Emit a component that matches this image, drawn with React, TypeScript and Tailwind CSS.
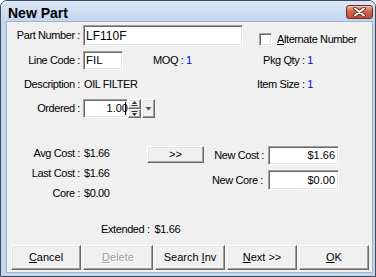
const font = "font-['Liberation_Sans',Arial,sans-serif]";
const sunken =
  'bg-white border border-t-[#a0a0a0] border-l-[#a0a0a0] border-r-white border-b-white shadow-[inset_1px_1px_0_#696969,inset_-1px_-1px_0_#e3e3e3]';
const raised =
  'bg-[#f0f0f0] border border-t-white border-l-white border-r-[#696969] border-b-[#696969] shadow-[inset_-1px_-1px_0_#a0a0a0,inset_1px_1px_0_#e3e3e3]';
const label = 'text-[11px] tracking-[-0.4px] text-black leading-none whitespace-nowrap';
const blue = 'text-[#0000ff]';

function CloseButton() {
  return (
    <div className="self-start w-[27px] h-[14px] mt-[4px] rounded-[3px] border border-[#6b2b24] bg-gradient-to-b from-[#e9a99b] via-[#d2614e] to-[#c44a36] flex items-center justify-center shadow-[inset_0_1px_0_#f4c8bd]">
      <svg width="13" height="10" viewBox="0 0 13 10">
        <path d="M2 1.5 L11 8.5 M11 1.5 L2 8.5" stroke="#5a2620" strokeWidth="3.6" strokeLinecap="round" />
        <path d="M2 1.5 L11 8.5 M11 1.5 L2 8.5" stroke="#ffffff" strokeWidth="2" strokeLinecap="round" />
      </svg>
    </div>
  );
}

function Btn({ children, disabled }: { children: React.ReactNode; disabled?: boolean }) {
  return (
    <div
      className={`w-[70px] h-[25px] ${raised} flex items-center justify-center text-[11px] ${
        disabled ? 'text-[#a0a0a0] [text-shadow:1px_1px_0_#fff]' : 'text-black'
      }`}
    >
      <span className="whitespace-pre">{children}</span>
    </div>
  );
}

function Row({ children, className }: { children: React.ReactNode; className: string }) {
  return <div className={`flex items-center ${className}`}>{children}</div>;
}

function Label({ children, w = 'w-[73px]' }: { children: React.ReactNode; w?: string }) {
  return <div className={`${w} text-right ${label}`}>{children}</div>;
}

export default function App() {
  return (
    <div className={`${font} w-[376px] h-[277px] rounded-t-[7px] border border-[#3e4c5e] bg-[#c3d6ee] flex flex-col`}>
      <div className="h-[20px] rounded-t-[6px] bg-gradient-to-b from-[#dbe7f5] to-[#c2d6ee] flex items-center justify-between pl-[7px] pr-[2px]">
        <span className="text-[14px] font-bold text-black leading-none mt-[3px]">New Part</span>
        <CloseButton />
      </div>

      <div className="ml-[5px] w-[367px] h-[252px] border border-[#9fb3cb] bg-[#f0f0f0] flex flex-col">
        {/* part number */}
        <div className="flex mt-[3px] h-[21px]">
          <div className="flex items-center">
            <Label>Part Number :</Label>
          </div>
          <div className={`ml-[3px] w-[160px] h-[21px] ${sunken} flex items-center pl-[2px] text-[12px] text-black`}>LF110F</div>
          <div className="ml-[16px] mt-[8px] flex items-center self-start">
            <div className={`w-[13px] h-[13px] ${sunken}`} />
            <span className={`ml-[5px] ${label}`}>
              <u>A</u>lternate Number
            </span>
          </div>
        </div>

        <Row className="mt-[5px] h-[19px]">
          <Label>Line Code :</Label>
          <div className={`ml-[3px] w-[40px] h-[19px] ${sunken} flex items-center pl-[2px] text-[11.5px] text-black`}>FIL</div>
          <span className={`ml-[30px] ${label}`}>
            MOQ : <span className={blue}>1</span>
          </span>
          <span className={`ml-auto mr-[59px] ${label}`}>
            Pkg Qty : <span className={blue}>1</span>
          </span>
        </Row>

        <Row className="mt-[5px] h-[18px]">
          <Label>Description :</Label>
          <span className={`ml-[4px] ${label} ${blue}`}>OIL FILTER</span>
          <span className={`ml-auto mr-[59px] ${label}`}>
            Item Size : <span className={blue}>1</span>
          </span>
        </Row>

        <Row className="mt-[6px] h-[19px]">
          <Label>Ordered :</Label>
          <div className={`ml-[3px] w-[45px] h-[19px] ${sunken} flex items-center justify-end pr-[1px] text-[11px] text-black`}>
            1.00
            <span className="w-[1px] h-[13px] bg-black -ml-[3px]" />
          </div>
          <div className="w-[13px] h-[19px] flex flex-col">
            <div className={`h-[10px] ${raised} flex items-center justify-center`}>
              <svg width="7" height="6" viewBox="0 0 7 6">
                <path d="M3.5 0 L6 3 L1 3 Z" fill="#333" />
                <rect x="0.5" y="4" width="6" height="1" fill="#333" />
              </svg>
            </div>
            <div className={`h-[9px] ${raised} flex items-center justify-center`}>
              <svg width="7" height="5" viewBox="0 0 7 5">
                <rect x="0.5" y="0" width="6" height="1" fill="#333" />
                <path d="M1 2 L6 2 L3.5 5 Z" fill="#333" />
              </svg>
            </div>
          </div>
          <div className={`ml-[1px] w-[13px] h-[19px] ${raised} flex items-center justify-center`}>
            <svg width="7" height="4" viewBox="0 0 7 4">
              <path d="M0.5 0 L6.5 0 L3.5 3.5 Z" fill="#555" />
            </svg>
          </div>
        </Row>

        {/* costs */}
        <div className="flex mt-[25px] h-[60px]">
          <div className="w-[140px] flex flex-col">
            {[
              ['Avg Cost :', '$1.66'],
              ['Last Cost :', '$1.66'],
              ['Core :', '$0.00'],
            ].map(([l, v]) => (
              <Row key={l} className="h-[20px]">
                <Label>{l}</Label>
                <span className={`ml-[4px] ${label}`}>{v}</span>
              </Row>
            ))}
          </div>
          <div className={`mt-[3px] w-[57px] h-[17px] ${raised} flex items-center justify-center text-[11px] text-black`}>
            &gt;&gt;
          </div>
          <div className="flex flex-col">
            <Row className="mt-[3px] h-[19px]">
              <Label w="w-[60px]">New Cost :</Label>
              <div className={`ml-[4px] w-[71px] h-[19px] ${sunken} flex items-center justify-end pr-[3px] text-[11px] text-black`}>$1.66</div>
            </Row>
            <Row className="mt-[5px] h-[20px]">
              <Label w="w-[59px]">New Core :</Label>
              <div className={`ml-[5px] w-[71px] h-[20px] ${sunken} flex items-center justify-end pr-[3px] text-[11px] text-black`}>$0.00</div>
            </Row>
          </div>
        </div>

        <Row className="mt-[16px] h-[20px] pl-[94px]">
          <span className={label}>Extended :</span>
          <span className={`ml-[5px] ${label} ${blue}`}>$1.66</span>
        </Row>

        <div className="mt-[6px] flex gap-[2px] pl-[4px]">
          <Btn>
            <u>C</u>ancel
          </Btn>
          <Btn disabled>
            <u>D</u>elete
          </Btn>
          <Btn>
            {'Search '}
            <u>I</u>nv
          </Btn>
          <Btn>
            <u>N</u>ext &gt;&gt;
          </Btn>
          <Btn>
            <u>O</u>K
          </Btn>
        </div>
      </div>
    </div>
  );
}
